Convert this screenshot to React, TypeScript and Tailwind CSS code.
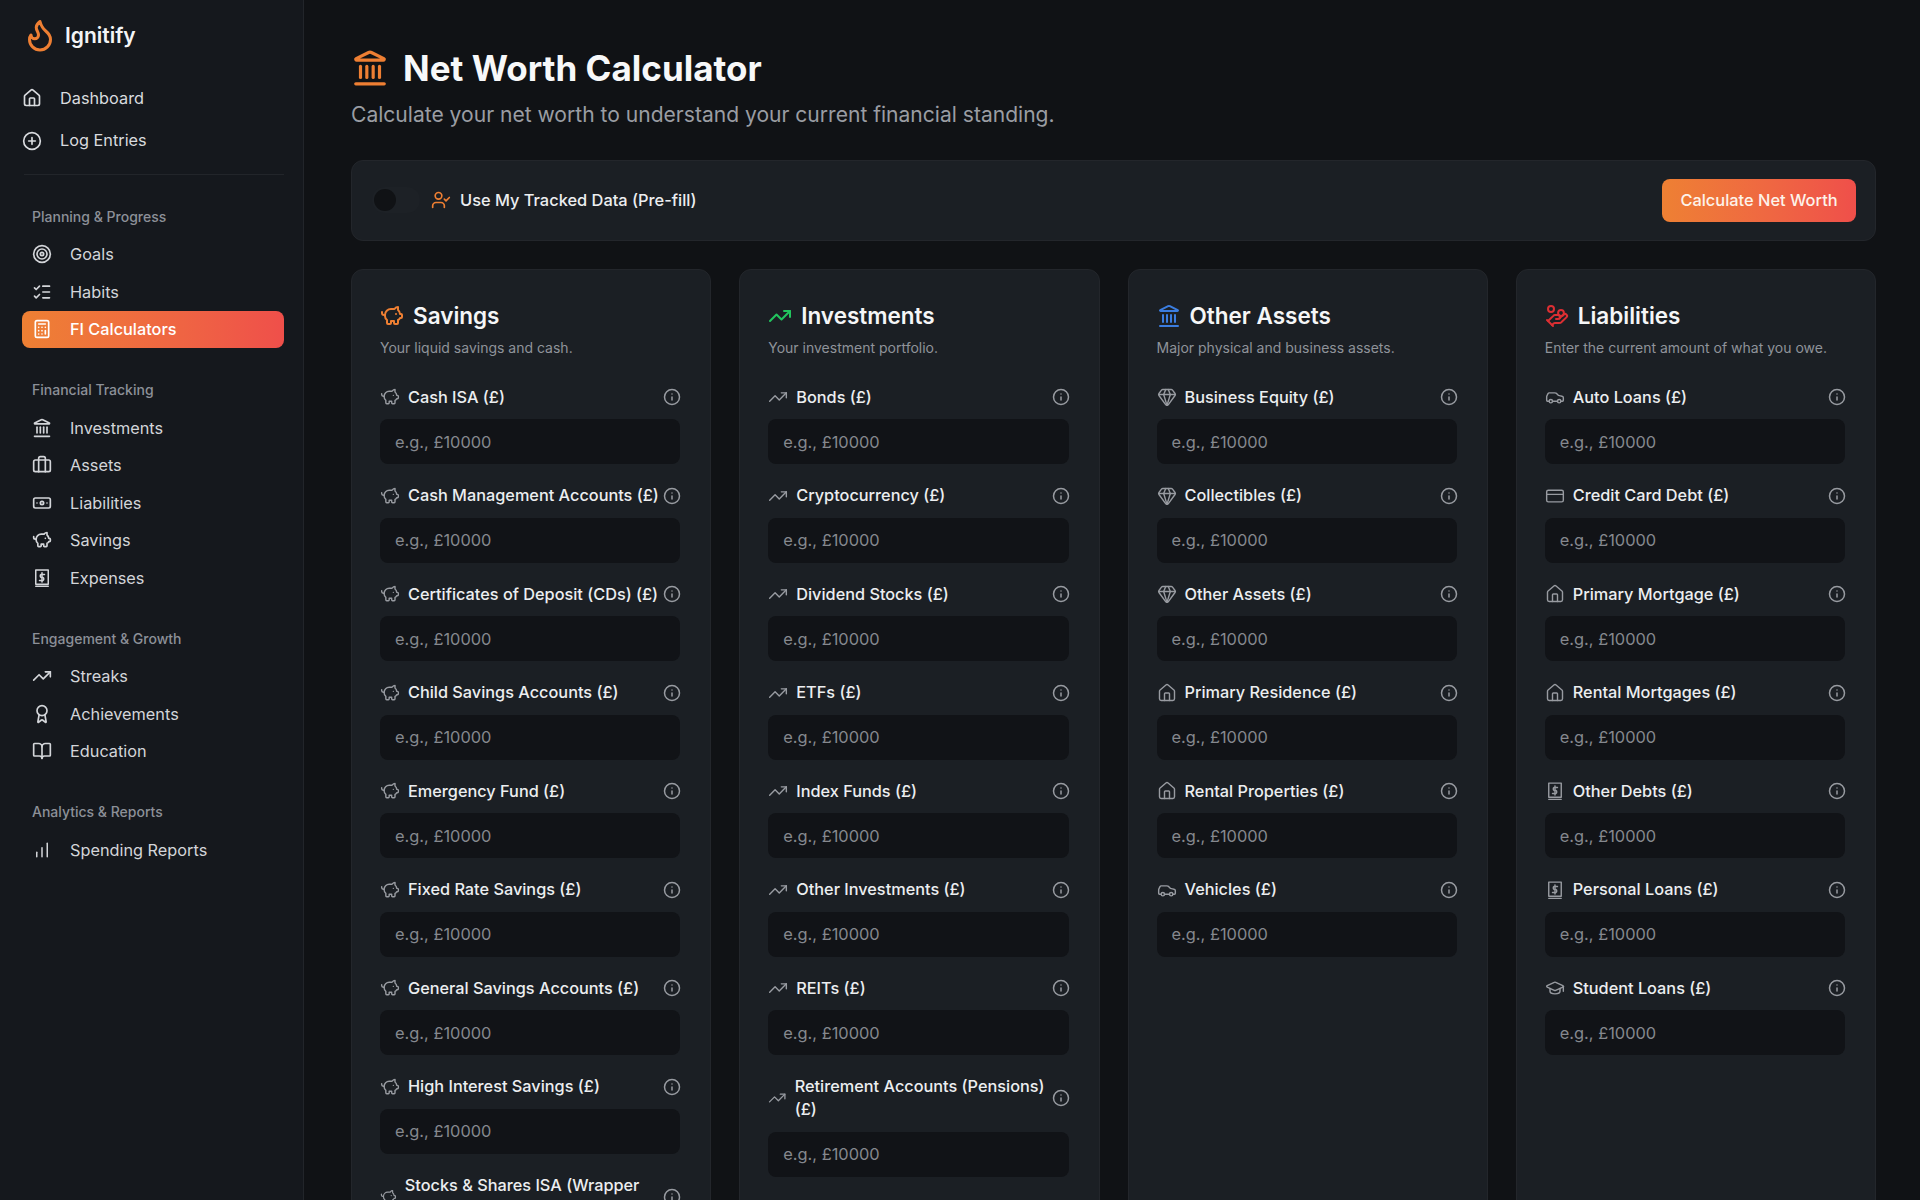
import {
  Award,
  Banknote,
  BookOpen,
  Briefcase,
  Calculator,
  Car,
  ChartNoAxesColumnIncreasing,
  CirclePlus,
  CreditCard,
  Flame,
  Gem,
  GraduationCap,
  HandCoins,
  House,
  Info,
  Landmark,
  ListChecks,
  PiggyBank,
  Target,
  TrendingUp,
  UserCheck,
} from "lucide-react";

type IconProps = { size?: number; className?: string; strokeWidth?: number };
type IconType = React.ComponentType<IconProps>;

// portrait bill with a dollar sign, no exact match in lucide
const BillIcon: React.FC<IconProps> = ({ size = 20, className, strokeWidth = 1.8 }) => (
  <svg
    width={size}
    height={size}
    viewBox="0 0 24 24"
    fill="none"
    stroke="currentColor"
    strokeWidth={strokeWidth}
    strokeLinecap="round"
    strokeLinejoin="round"
    className={className}
  >
    <rect x="4.5" y="2.5" width="15" height="17" />
    <path d="M4.5 22h15" />
    <path d="M15 7.8h-4a2 2 0 0 0 0 3.6h2a2 2 0 0 1 0 3.6H9" />
    <path d="M12 5.8v11" />
  </svg>
);

const BarsIcon: React.FC<IconProps> = () => (
  <ChartNoAxesColumnIncreasing size={18} className="mx-[1px]" />
);

interface NavGroup {
  title: string;
  items: { label: string; icon: IconType; active?: boolean }[];
}

const navGroups: NavGroup[] = [
  {
    title: "Planning & Progress",
    items: [
      { label: "Goals", icon: Target },
      { label: "Habits", icon: ListChecks },
      { label: "FI Calculators", icon: Calculator, active: true },
    ],
  },
  {
    title: "Financial Tracking",
    items: [
      { label: "Investments", icon: Landmark },
      { label: "Assets", icon: Briefcase },
      { label: "Liabilities", icon: Banknote },
      { label: "Savings", icon: PiggyBank },
      { label: "Expenses", icon: BillIcon },
    ],
  },
  {
    title: "Engagement & Growth",
    items: [
      { label: "Streaks", icon: TrendingUp },
      { label: "Achievements", icon: Award },
      { label: "Education", icon: BookOpen },
    ],
  },
  {
    title: "Analytics & Reports",
    items: [{ label: "Spending Reports", icon: BarsIcon }],
  },
];

interface Section {
  title: string;
  description: string;
  icon: IconType;
  color: string;
  fields: { label: string; icon: IconType }[];
}

const sections: Section[] = [
  {
    title: "Savings",
    description: "Your liquid savings and cash.",
    icon: PiggyBank,
    color: "text-[#ee7f33]",
    fields: [
      { label: "Cash ISA (£)", icon: PiggyBank },
      { label: "Cash Management Accounts (£)", icon: PiggyBank },
      { label: "Certificates of Deposit (CDs) (£)", icon: PiggyBank },
      { label: "Child Savings Accounts (£)", icon: PiggyBank },
      { label: "Emergency Fund (£)", icon: PiggyBank },
      { label: "Fixed Rate Savings (£)", icon: PiggyBank },
      { label: "General Savings Accounts (£)", icon: PiggyBank },
      { label: "High Interest Savings (£)", icon: PiggyBank },
      { label: "Stocks & Shares ISA (Wrapper only) (£)", icon: PiggyBank },
    ],
  },
  {
    title: "Investments",
    description: "Your investment portfolio.",
    icon: TrendingUp,
    color: "text-[#22c55e]",
    fields: [
      { label: "Bonds (£)", icon: TrendingUp },
      { label: "Cryptocurrency (£)", icon: TrendingUp },
      { label: "Dividend Stocks (£)", icon: TrendingUp },
      { label: "ETFs (£)", icon: TrendingUp },
      { label: "Index Funds (£)", icon: TrendingUp },
      { label: "Other Investments (£)", icon: TrendingUp },
      { label: "REITs (£)", icon: TrendingUp },
      { label: "Retirement Accounts (Pensions) (£)", icon: TrendingUp },
    ],
  },
  {
    title: "Other Assets",
    description: "Major physical and business assets.",
    icon: Landmark,
    color: "text-[#3b7de0]",
    fields: [
      { label: "Business Equity (£)", icon: Gem },
      { label: "Collectibles (£)", icon: Gem },
      { label: "Other Assets (£)", icon: Gem },
      { label: "Primary Residence (£)", icon: House },
      { label: "Rental Properties (£)", icon: House },
      { label: "Vehicles (£)", icon: Car },
    ],
  },
  {
    title: "Liabilities",
    description: "Enter the current amount of what you owe.",
    icon: HandCoins,
    color: "text-[#dc2f33]",
    fields: [
      { label: "Auto Loans (£)", icon: Car },
      { label: "Credit Card Debt (£)", icon: CreditCard },
      { label: "Primary Mortgage (£)", icon: House },
      { label: "Rental Mortgages (£)", icon: House },
      { label: "Other Debts (£)", icon: BillIcon },
      { label: "Personal Loans (£)", icon: BillIcon },
      { label: "Student Loans (£)", icon: GraduationCap },
    ],
  },
];

const Sidebar = () => (
  <aside className="w-[304px] shrink-0 h-full bg-[#15181d] border-r border-[#22252a] pt-[18px] pl-[22px] pr-[19px]">
    <div className="flex items-center h-[34px] gap-[7px]">
      <Flame size={36} className="text-[#ee7f33]" />
      <span className="mt-[2px] text-[21px] font-semibold text-[#f3f4f6]">Ignitify</span>
    </div>

    <div className="mt-[24.5px]">
      <div className="flex items-center h-[43px] gap-[18px] text-[#d9dbdf] text-[16.3px]">
        <House size={20} />
        <span>Dashboard</span>
      </div>
      <div className="flex items-center h-[42px] gap-[18px] text-[#d9dbdf] text-[16.3px]">
        <CirclePlus size={20} />
        <span>Log Entries</span>
      </div>
    </div>
    <div className="mt-[12px] ml-[2px] h-px bg-[#22252a]" />

    {navGroups.map((group) => (
      <div key={group.title} className="mt-[32px]">
        <div className="pl-[10px] h-5 leading-5 mb-[9px] text-sm font-medium text-[#8c9098]">
          {group.title}
        </div>
        {group.items.map((item) => (
          <div
            key={item.label}
            className={
              item.active
                ? "flex items-center h-[37.5px] pl-[10px] gap-[18px] rounded-lg text-[16.3px] font-medium text-white bg-gradient-to-r from-[#ee8033] to-[#ef4f4a]"
                : "flex items-center h-[37.5px] pl-[10px] gap-[18px] text-[16.3px] text-[#d3d5d9]"
            }
          >
            <item.icon size={20} />
            <span>{item.label}</span>
          </div>
        ))}
      </div>
    ))}
  </aside>
);

const SectionCard = ({ section }: { section: Section }) => (
  <div className="bg-[#1b1f24] border border-[#23262b] rounded-xl pt-[28px] pl-[28px] pr-[30px] pb-6">
    <div className="flex items-center gap-[9px] h-9">
      <section.icon size={24} className={section.color} />
      <h2 className="text-[22.5px] font-semibold text-[#f5f6f7]">{section.title}</h2>
    </div>
    <p className="mt-[4.5px] text-sm leading-5 text-[#8f939a]">{section.description}</p>
    <div className="mt-[27.5px] space-y-[20px]">
      {section.fields.map((field) => (
        <div key={field.label}>
          <label className="flex items-center justify-between gap-[2px] -mr-[1px] mb-[10.5px]">
            <span className="flex items-center gap-2">
              <field.icon size={20} className="text-[#989ba1]" strokeWidth={1.7} />
              <span className="text-[16.3px] leading-[23px] font-medium text-[#eceef0]">{field.label}</span>
            </span>
            <Info size={18} className="shrink-0 text-[#989ba1]" />
          </label>
          <input
            type="text"
            placeholder="e.g., £10000"
            className="w-full h-[45px] px-[15px] rounded-lg bg-[#111317] text-[16.4px] text-white placeholder:text-[#85888e] outline-none"
          />
        </div>
      ))}
    </div>
  </div>
);

export default function App() {
  return (
    <div className="flex h-screen overflow-hidden bg-[#101215] font-['Inter',sans-serif]">
      <Sidebar />
      <main className="flex-1 min-w-0 overflow-hidden pt-[48px] pl-[47px] pr-[44px]">
        <div className="flex items-center gap-[14px] h-10">
          <Landmark size={38} className="text-[#ee7f33]" />
          <h1 className="text-[35px] font-bold text-[#f7f8f9]">Net Worth Calculator</h1>
        </div>
        <p className="mt-[13px] text-[21.07px] leading-7 text-[#9a9da3]">
          Calculate your net worth to understand your current financial standing.
        </p>

        <div className="mt-[30.5px] flex items-center justify-between h-[81px] pl-5 pr-[19px] bg-[#1b1f24] border border-[#23262b] rounded-xl">
          <div className="flex items-center">
            <div className="w-12 h-[26px] p-[2px] rounded-full bg-[#1d2126]">
              <div className="w-[22px] h-[22px] rounded-full bg-[#101215]" />
            </div>
            <UserCheck size={20} className="ml-[11px] text-[#ee7f33]" />
            <span className="ml-[9px] text-[16.4px] font-medium text-[#eceef0]">Use My Tracked Data (Pre-fill)</span>
          </div>
          <button className="w-[194px] h-[43px] rounded-lg text-[16.4px] font-medium text-[#fdf3ea] bg-gradient-to-r from-[#ee8033] to-[#ef4f4a]">
            Calculate Net Worth
          </button>
        </div>

        <div className="mt-[28px] grid grid-cols-4 gap-7 items-stretch min-h-[1000px]">
          {sections.map((section) => (
            <SectionCard key={section.title} section={section} />
          ))}
        </div>
      </main>
    </div>
  );
}
